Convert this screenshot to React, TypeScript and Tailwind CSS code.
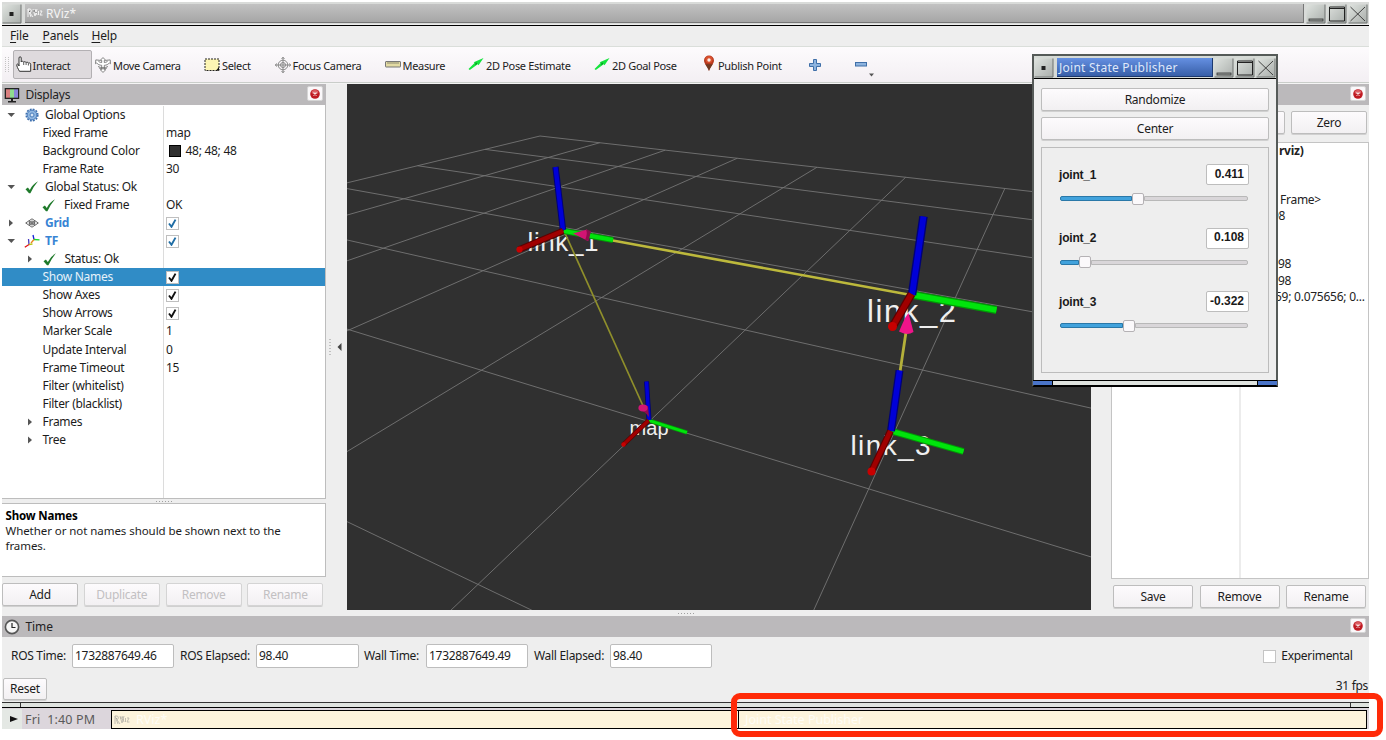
import React from "react";

const UI = "font-['Noto_Sans',sans-serif]";

/* ---------- 3D scene ---------- */

type Pt = [number, number];

// Perspective of the ground plane: grid cell (i, j) to window coordinates.
const depth = (i: number, j: number) => 1 - 0.04379 * i - 0.09111 * j;
const project = (i: number, j: number): Pt => {
  const w = depth(i, j);
  return [(33.47 * i - 99.22 * j + 540) / w, (0.49 * i - 0.245 * j + 136) / w];
};

function gridLines() {
  const lines: [Pt, Pt][] = [];
  const NEAR = 0.02;
  for (let k = 0; k <= 10; k++) {
    const maxJ = Math.min(10, (1 - 0.04379 * k - NEAR) / 0.09111);
    const maxI = Math.min(10, (1 - 0.09111 * k - NEAR) / 0.04379);
    if (maxJ > 0) lines.push([project(k, 0), project(k, maxJ)]);
    if (maxI > 0) lines.push([project(0, k), project(maxI, k)]);
  }
  return lines;
}

function Rod({ a, b, w, c, dark }: { a: Pt; b: Pt; w: number; c: string; dark: string }) {
  return (
    <g>
      <line x1={a[0]} y1={a[1]} x2={b[0]} y2={b[1]} stroke={dark} strokeWidth={w} />
      <line x1={a[0]} y1={a[1]} x2={b[0]} y2={b[1]} stroke={c} strokeWidth={w * 0.68} />
    </g>
  );
}

const BLUE = { c: "#0000d8", dark: "#000078" };
const GREEN = { c: "#00e40c", dark: "#009a06" };
const RED = { c: "#a00000", dark: "#5c0000" };

function Scene() {
  return (
    <svg className="block h-[526px] w-[744px] bg-[#303030]" viewBox="347 84 744 526">
      <g stroke="#757575" strokeWidth="0.9">
        {gridLines().map(([a, b], n) => (
          <line key={n} x1={a[0]} y1={a[1]} x2={b[0]} y2={b[1]} />
        ))}
      </g>
      <g fill="#efefef" fontFamily="Liberation Sans, sans-serif">
        <text x="527.500" y="250.500" fontSize="26" textLength="71">link_1</text>
        <text x="867" y="321.500" fontSize="31" textLength="89">link_2</text>
        <text x="850.500" y="454.500" fontSize="28" textLength="80">link_3</text>
        <text x="629.500" y="435" fontSize="20" textLength="39">map</text>
      </g>
      <line x1="564" y1="231" x2="644" y2="408" stroke="#8f8f2b" strokeWidth="1.7" />
      <line x1="610" y1="240" x2="911" y2="295" stroke="#bdb93c" strokeWidth="2.6" />
      <line x1="906" y1="332" x2="900" y2="372" stroke="#b4b03a" strokeWidth="2.8" />

      <Rod a={[564, 231]} b={[613, 240]} w={6} {...GREEN} />
      <Rod a={[563, 230]} b={[555.5, 167]} w={6.4} {...BLUE} />
      <path d="M573 233.500 L587 229.500 Q591 234 588 241 Z" fill="#d21473" />
      <path d="M586 229.500 L591 231 L588.500 241 L585 240 Q588 234 586 229.500Z" fill="#8d0d4e" />
      <Rod a={[563, 231]} b={[519, 249.5]} w={6.4} {...RED} />
      <circle cx="519.500" cy="249.500" r="3.100" fill="#c80000" />

      <Rod a={[911, 294.5]} b={[996.5, 310]} w={8} {...GREEN} />
      <Rod a={[912, 295]} b={[923.5, 216.5]} w={8.6} {...BLUE} />
      <path d="M908.500 313 L913.500 332 Q907 336 899 331.500 L905 318 Z" fill="#f0148a" />
      <Rod a={[911.5, 294]} b={[893, 326]} w={8.4} {...RED} />
      <circle cx="892.500" cy="326.500" r="4.500" fill="#c80000" />

      <Rod a={[891, 431]} b={[963.5, 451.5]} w={6.8} {...GREEN} />
      <Rod a={[891, 431]} b={[899.5, 370.5]} w={8} {...BLUE} />
      <Rod a={[890.5, 431]} b={[871.5, 471.5]} w={7} {...RED} />
      <circle cx="871.500" cy="471.500" r="4" fill="#c80000" />

      <Rod a={[649, 420.5]} b={[687, 432.5]} w={4.2} {...GREEN} />
      <Rod a={[649, 420]} b={[646.5, 381.5]} w={5} {...BLUE} />
      <path d="M638.500 408 L648 406 L649 417 L645.500 413 Z" fill="#8d0d4e" />
      <ellipse cx="643" cy="408" rx="4.600" ry="3.400" fill="#d01575" />
      <Rod a={[648.5, 420.5]} b={[623, 445]} w={4.6} {...RED} />
      <circle cx="623.500" cy="444.500" r="2.200" fill="#c80000" />
    </svg>
  );
}

/* ---------- small widgets ---------- */

function CloseBtn() {
  return (
    <span className="mb-[2px] flex h-[15px] w-[16px] items-center justify-center rounded-[2px] border border-[#d5d5d5] bg-[#faf8fa]">
      <svg width="10" height="10" viewBox="0 0 10 10">
        <circle cx="5" cy="5" r="4.800" fill="#bf1a22" />
        <ellipse cx="5" cy="3" rx="3.400" ry="2" fill="#dc5f64" />
        <path d="M3.500 3.500l3 3M6.500 3.500l-3 3" stroke="#f6e4e4" strokeWidth="1.100" />
      </svg>
    </span>
  );
}

function Btn({ label, cls, off }: { label: string; cls: string; off?: boolean }) {
  return (
    <div
      className={`flex shrink-0 items-center justify-center rounded-[2px] border bg-linear-to-b from-[#fdfbfd] to-[#f2f0f2] text-[12px] tracking-[-0.25px] shadow-[0_1px_0_#d0d0d0] ${
        off ? "border-[#d4d4d4] text-[#c2c0c2]" : "border-[#bdbdbd] text-[#1c1c1c]"
      } ${cls}`}
    >
      {label}
    </div>
  );
}

function WinButton({ kind }: { kind: "dot" | "min" | "max" | "close" }) {
  return (
    <svg className="block shrink-0" width="20" height="20" viewBox="0 0 20 20">
      <defs>
        <linearGradient id={`wb-${kind}`} x1="0" y1="0" x2="1" y2="1">
          <stop offset="0" stopColor="#dfe3df" />
          <stop offset="1" stopColor="#a9aeab" />
        </linearGradient>
      </defs>
      <rect x="0.500" y="0.500" width="18.500" height="18.500" fill={`url(#wb-${kind})`} />
      <path d="M0.500 19h18.500V0.500" fill="none" stroke="#6f7371" />
      {kind === "dot" && <rect x="7.500" y="8" width="4" height="4" fill="#222" />}
      {kind === "min" && <rect x="3" y="15" width="14" height="2" fill="#9a9e9b" stroke="#333" strokeWidth="0.800" />}
      {kind === "max" && <path d="M2.500 3h15v14h-15zM2.500 4.500h15" fill="none" stroke="#222" strokeWidth="1" />}
      {kind === "close" && <path d="M2.500 3l14.500 14M17 3L2.500 17" stroke="#333" strokeWidth="0.900" />}
    </svg>
  );
}

function RvizMark({ className, fill }: { className?: string; fill: string }) {
  return (
    <svg className={className} width="16" height="10" viewBox="0 0 16 10" fill="none" stroke={fill} strokeWidth="1">
      <path d="M1 9V1h2.500l1 2-1.500 2L6 9M1 1l3 8M6 1l2 7 2-7M8 1l2 6M11.500 3v4M13 3h2l-2 4h2.500" />
      <path d="M2 3l1 1M7 2v2M9 4v1" stroke="#666" />
    </svg>
  );
}

/* ---------- toolbar ---------- */

const HandIcon = () => (
  <svg className="-mt-[2px]" width="16" height="16" viewBox="0 0 16 16" fill="#fff" stroke="#333" strokeWidth="1">
    <path d="M3.500 15.300C2 12.500.6 10.500.8 8.500c.7-1 1.700-.4 2.200 1.500V2c0-1.700 2.200-1.700 2.200 0v4c0-1 2.400-1 2.500.3.200-.9 2.300-.8 2.400.4.300-.8 2.200-.6 2.300.5.500-.6 2.300-.3 2.300 1v7.100z" />
    <path d="M7.700 6.500v2.500M10.100 7v2M12.400 7.500v2" strokeWidth="0.800" />
  </svg>
);
const MoveIcon = () => (
  <svg width="16" height="16" viewBox="0 0 16 16" fill="#fff" stroke="#777" strokeWidth="0.900">
    <path d="M8 .6l2.800 2.700H9.300v2.200c1.800 0 2.700-.6 3.100-1.300l-1-.9 3.800-.4.3 3.800-1.100-.8c-1.200 1.500-2.900 2.300-5.100 2.400v4.400h1.500L8 15.400l-2.800-2.700h1.500V8.300C4.500 8.200 2.800 7.400 1.600 5.900l-1.100.8.3-3.800 3.800.4-1 .9c.4.700 1.300 1.300 3.100 1.300V3.300H5.200z" />
    <path d="M3 9.500c3 1.600 7 1.600 10 0M4 11c2.500 1 5.500 1 8 0" fill="none" />
  </svg>
);
const SelectIcon = () => (
  <svg width="16" height="14" viewBox="0 0 16 14">
    <rect x="1" y="1" width="14" height="11.500" fill="#fdf5b4" stroke="#222" strokeWidth="1" strokeDasharray="2 1" />
    <path d="M12 12.500h3V9z" fill="#111" />
  </svg>
);
const FocusIcon = () => (
  <svg width="16" height="16" viewBox="0 0 16 16" fill="none" stroke="#888" strokeWidth="1">
    <circle cx="8" cy="8" r="4.800" />
    <circle cx="8" cy="8" r="2.500" />
    <path d="M8 0v16M0 8h16M6.500 2L8 .3 9.500 2M6.500 14L8 15.700 9.500 14M2 6.500L.3 8 2 9.500M14 6.500L15.700 8 14 9.500" />
  </svg>
);
const MeasureIcon = () => (
  <svg width="16" height="7" viewBox="0 0 16 7">
    <rect x="0.500" y="0.500" width="15" height="5.500" rx="0.500" fill="#e3dba4" stroke="#777" />
    <path d="M3 1v2M5 1v2M7 1v2M9 1v2M11 1v2M13 1v2" stroke="#776" strokeWidth="0.800" />
  </svg>
);
const ArrowIcon = () => (
  <svg className="-mt-[2px]" width="16" height="14" viewBox="0 0 16 14">
    <path d="M0.500 12L6.500 6l-.8-.8L15.500 1 10.500 8.200l-.8-1L1.800 13z" fill="#14e43c" />
    <path d="M7.800 5l1.400 1.700-2 1.500z" fill="#0a8a20" />
  </svg>
);
const PinIcon = () => (
  <svg className="-mt-[3px] ml-[1px]" width="12" height="17" viewBox="0 0 12 17">
    <path d="M6 16C5 12 1 9 1 5.500a5 5 0 0110 0C11 9 7 12 6 16z" fill="#b5391f" />
    <path d="M6 16c-.7-2.600-2.600-4.800-3.800-6.800h7.600C8.600 11.200 6.700 13.400 6 16z" fill="#6e3a22" />
    <circle cx="6" cy="4.500" r="3.600" fill="#d9512f" />
    <circle cx="6" cy="5" r="1.700" fill="#fbeee8" />
  </svg>
);

const tools = [
  { label: "Interact", icon: <HandIcon />, w: "w-[79px] mr-[2px] pl-[1.5px] rounded-[2px] border border-[#b3b0b3] bg-[#dedadd]", ic: "w-[17px]" },
  { label: "Move Camera", icon: <MoveIcon />, w: "w-[109px] pl-[1px]", ic: "w-[18px]" },
  { label: "Select", icon: <SelectIcon />, w: "w-[70px] pl-[1px]", ic: "w-[18px]" },
  { label: "Focus Camera", icon: <FocusIcon />, w: "w-[110px] pl-[1.5px]", ic: "w-[18px]" },
  { label: "Measure", icon: <MeasureIcon />, w: "w-[84px] pl-[1.5px]", ic: "w-[18px]" },
  { label: "2D Pose Estimate", icon: <ArrowIcon />, w: "w-[126px] pl-[1px]", ic: "w-[18px]" },
  { label: "2D Goal Pose", icon: <ArrowIcon />, w: "w-[109px] pl-[1px]", ic: "w-[18px]" },
  { label: "Publish Point", icon: <PinIcon />, w: "w-[105px]", ic: "w-[16px]" },
];

function Toolbar() {
  return (
    <div className="flex h-[37px] items-center border-y border-[#c9cdc9] border-t-[#dadeda] bg-linear-to-b from-[#fdfbfd] to-[#f3eff3] text-[11px] tracking-[-0.32px] text-[#222]">
      <div className="ml-[3px] mr-[3px] grid w-[5px] grid-cols-2 gap-[1px]">
        {Array.from({ length: 16 }).map((_, i) => (
          <span key={i} className="h-[1px] w-[1px] bg-[#c4c4c4]" />
        ))}
      </div>
      {tools.map((t) => (
        <div key={t.label} className={`flex h-[29px] shrink-0 items-center whitespace-nowrap ${t.w}`}>
          <span className={`flex shrink-0 ${t.ic}`}>{t.icon}</span>
          <span className="pt-[3px]">{t.label}</span>
        </div>
      ))}
      <svg className="ml-[2px]" width="12" height="12" viewBox="0 0 12 12">
        <path d="M4.500 0.500h3v4h4v3h-4v4h-3v-4h-4v-3h4z" fill="#8db3de" stroke="#3f6fa8" />
      </svg>
      <svg className="ml-[34px] mt-[2px]" width="19" height="22" viewBox="0 0 19 22">
        <rect x="0.500" y="7.500" width="11" height="3.500" fill="#8db3de" stroke="#3f6fa8" />
        <path d="M14 18.500h5l-2.500 3z" fill="#555" />
      </svg>
    </div>
  );
}

/* ---------- displays tree ---------- */

const Check = ({ c = "#111" }: { c?: string }) => (
  <span className="-ml-[0.5px] flex h-[13px] w-[13px] items-center justify-center border border-[#bfbfbf] bg-white">
    <svg width="9" height="9" viewBox="0 0 9 9" fill="none" stroke={c} strokeWidth="1.9">
      <path d="M1 4.500l2.500 3.300L7.500.6" />
    </svg>
  </span>
);
const Tick = () => (
  <svg width="14" height="13" viewBox="0 0 14 13">
    <path d="M0.500 8.200l2.400-1.600 1.900 2.400Q7.500 3.200 13 .3 8.500 5.500 5.400 12.200H4z" fill="#1f7a2b" />
  </svg>
);
const Gear = () => (
  <svg width="14" height="14" viewBox="0 0 14 14" fill="none">
    <circle cx="7" cy="7" r="5.800" stroke="#3d6fae" strokeWidth="1.600" strokeDasharray="1.900 1.140" />
    <circle cx="7" cy="7" r="4.800" fill="#8fb6e0" stroke="#4a7dbd" />
    <circle cx="7" cy="7" r="2" fill="#d6e5f5" stroke="#4a7dbd" />
  </svg>
);
const GridIcon = () => (
  <svg width="14" height="10" viewBox="0 0 14 10" fill="none" stroke="#555" strokeWidth="0.900">
    <path d="M7 .8L13.300 5 7 9.200.7 5zM3.800 2.900l6.300 4.200M10.200 2.900L3.900 7.100" />
    <path d="M7 2.900L10.200 5 7 7.100 3.800 5z" />
  </svg>
);
const TfIcon = () => (
  <svg width="16" height="14" viewBox="0 0 16 14" fill="none" strokeWidth="1.300">
    <path d="M9 1l1 4.500" stroke="#1522d8" />
    <path d="M10 5.500l5.500.3" stroke="#19d82c" />
    <path d="M10 5.500L7 9" stroke="#e8841a" />
    <path d="M4.500 5L5 10.500" stroke="#4438c0" />
    <path d="M5 10.500l3.500-.5" stroke="#b8c81a" />
    <path d="M5 10.500L.8 13.300" stroke="#e01414" />
  </svg>
);
const Tri = ({ open }: { open: boolean }) => (
  <svg width="8" height="8" viewBox="0 0 8 8" fill="#555">
    {open ? <path d="M0.500 2h7.500L4.300 6z" /> : <path d="M2 .5v7L6 4z" />}
  </svg>
);

type Row = {
  t: string;
  pad: string;
  open?: boolean;
  icon?: React.ReactNode;
  iconBox?: string;
  v?: React.ReactNode;
  link?: boolean;
  sel?: boolean;
};

const ROOT_ICON = "w-[16px] mr-[5.5px]";

const rows: Row[] = [
  { t: "Global Options", pad: "pl-[5px]", open: true, icon: <Gear />, iconBox: ROOT_ICON },
  { t: "Fixed Frame", pad: "pl-[40.5px]", v: "map" },
  {
    t: "Background Color",
    pad: "pl-[40.5px]",
    v: (
      <span className="flex items-center gap-[4.5px] pl-[3px]">
        <span className="h-[12px] w-[12px] border border-black bg-[#303030]" />
        48; 48; 48
      </span>
    ),
  },
  { t: "Frame Rate", pad: "pl-[40.5px]", v: "30" },
  { t: "Global Status: Ok", pad: "pl-[5px]", open: true, icon: <Tick />, iconBox: ROOT_ICON },
  { t: "Fixed Frame", pad: "pl-[40px]", icon: <Tick />, iconBox: "w-[14px] mr-[8px]", v: "OK" },
  { t: "Grid", pad: "pl-[5px]", open: false, icon: <GridIcon />, iconBox: ROOT_ICON, v: <Check c="#1f6da5" />, link: true },
  { t: "TF", pad: "pl-[5px]", open: true, icon: <TfIcon />, iconBox: ROOT_ICON, v: <Check c="#1f6da5" />, link: true },
  { t: "Status: Ok", pad: "pl-[24px]", open: false, icon: <Tick />, iconBox: "w-[14px] mr-[8px]" },
  { t: "Show Names", pad: "pl-[40.5px]", v: <Check />, sel: true },
  { t: "Show Axes", pad: "pl-[40.5px]", v: <Check /> },
  { t: "Show Arrows", pad: "pl-[40.5px]", v: <Check /> },
  { t: "Marker Scale", pad: "pl-[40.5px]", v: "1" },
  { t: "Update Interval", pad: "pl-[40.5px]", v: "0" },
  { t: "Frame Timeout", pad: "pl-[40.5px]", v: "15" },
  { t: "Filter (whitelist)", pad: "pl-[40.5px]" },
  { t: "Filter (blacklist)", pad: "pl-[40.5px]" },
  { t: "Frames", pad: "pl-[24px]", open: false },
  { t: "Tree", pad: "pl-[24px]", open: false },
];

function TreeRow({ r }: { r: Row }) {
  return (
    <div className={`flex h-[18.06px] shrink-0 items-stretch ${r.sel ? "bg-[#308cc6] text-[#e6f2fa]" : "text-[#1c1c1c]"}`}>
      <div className={`flex w-[162px] shrink-0 items-center whitespace-nowrap border-r ${r.sel ? "border-[#308cc6]" : "border-[#dcdcdc]"} ${r.pad}`}>
        {r.open !== undefined && (
          <span className="w-[16.5px] shrink-0">
            <Tri open={r.open} />
          </span>
        )}
        {r.icon && <span className={`flex shrink-0 items-center justify-center ${r.iconBox}`}>{r.icon}</span>}
        <span className={r.link ? "font-bold text-[#3784d4]" : ""}>{r.t}</span>
      </div>
      <div className="flex items-center pl-[2px]">{r.v}</div>
    </div>
  );
}

function DisplaysDock() {
  return (
    <div className="flex w-[324px] shrink-0 flex-col">
      <div className="flex h-[21px] shrink-0 items-center bg-[#bbb9bb] pr-[3px]">
        <svg className="ml-[2px]" width="16" height="16" viewBox="0 0 16 16">
          <rect x="0.700" y="1" width="14.500" height="11" fill="#222" />
          <rect x="2" y="2.300" width="4" height="8.400" fill="#d97f7f" />
          <rect x="6" y="2.300" width="4" height="8.400" fill="#8fdc8f" />
          <rect x="10" y="2.300" width="4" height="8.400" fill="#8a86d8" />
          <path d="M7 12h2v2h3v1.500H4V14h3z" fill="#222" />
        </svg>
        <span className="ml-[5.5px] flex-1 text-[12px] tracking-[-0.25px] text-[#222]">Displays</span>
        <CloseBtn />
      </div>
      <div className="flex h-[394px] shrink-0 flex-col border-b border-r border-[#bdbdbd] bg-white text-[12px] tracking-[-0.28px]">
        <div className="h-[0.9px] w-full shrink-0" />
        {rows.map((r, i) => (
          <TreeRow key={i} r={r} />
        ))}
        <div className="w-[162px] flex-1 border-r border-[#dcdcdc]" />
      </div>
      <div className="flex h-[4px] shrink-0 items-center justify-center gap-[2px]">
        {Array.from({ length: 6 }).map((_, i) => (
          <span key={i} className="h-[1px] w-[1px] bg-[#a0a0a0]" />
        ))}
      </div>
      <div className="h-[74px] shrink-0 border border-l-0 border-[#bdbdbd] bg-white pl-[3.5px] pt-[3.5px] text-[11.5px] leading-[15.2px] tracking-[-0.06px] text-[#1c1c1c]">
        <div className="font-bold tracking-[-0.15px] text-black">Show Names</div>
        <div>
          Whether or not names should be shown next to the
          <br />
          frames.
        </div>
      </div>
      <div className="flex gap-[5.8px] pt-[6px]">
        <Btn label="Add" cls="h-[23px] w-[76px]" />
        <Btn label="Duplicate" off cls="h-[23px] w-[76px]" />
        <Btn label="Remove" off cls="h-[23px] w-[76px]" />
        <Btn label="Rename" off cls="h-[23px] w-[76px]" />
      </div>
    </div>
  );
}

/* ---------- views dock ---------- */

const viewLines = [
  { t: "rviz)", cls: "font-bold h-[48.5px]" },
  { t: "t Frame>", cls: "h-[16.2px] -ml-[6px]" },
  { t: "98", cls: "h-[48.7px] -ml-[7px]" },
  { t: ".98", cls: "h-[16.2px] -ml-[4px]" },
  { t: ".98", cls: "h-[16.2px] -ml-[4px]" },
  { t: "59; 0.075656; 0...", cls: "h-[16.2px] -ml-[4px]" },
];

function ViewsDock() {
  return (
    <div className="flex w-[258px] shrink-0 flex-col">
      <div className="flex h-[21px] shrink-0 items-center justify-end bg-[#bbb9bb] pr-[3px]">
        <CloseBtn />
      </div>
      <div className="flex h-[37px] shrink-0 justify-end gap-[6px] pr-[2px] pt-[6px]">
        <Btn label="" cls="h-[23px] w-[76px]" />
        <Btn label="Zero" cls="h-[23px] w-[76px]" />
      </div>
      <div className="flex h-[437px] shrink-0 border border-[#c4c4c4] bg-white">
        <div className="w-[129px] shrink-0 border-r-2 border-[#ececec]" />
        <div className="pl-[38px] text-[12px] leading-[16px] tracking-[-0.25px] text-[#222]">
          {viewLines.map((l, i) => (
            <div key={i} className={`whitespace-nowrap ${l.cls}`}>
              {l.t}
            </div>
          ))}
        </div>
      </div>
      <div className="flex gap-[6.5px] pl-[2px] pt-[6px]">
        <Btn label="Save" cls="h-[23px] w-[80px]" />
        <Btn label="Remove" cls="h-[23px] w-[80px]" />
        <Btn label="Rename" cls="h-[23px] w-[80px]" />
      </div>
    </div>
  );
}

/* ---------- time panel ---------- */

function Field({ label, value, labelW, boxW }: { label: string; value: string; labelW: string; boxW: string }) {
  return (
    <div className="flex items-center">
      <span className={`whitespace-nowrap ${labelW}`}>{label}</span>
      <span className={`flex h-[23.5px] items-center rounded-[2px] border border-[#bdbdbd] bg-white pb-[1px] pl-[2px] ${boxW}`}>{value}</span>
    </div>
  );
}

function TimePanel() {
  return (
    <div className="h-[86px] shrink-0 text-[12px] tracking-[-0.3px] text-[#1c1c1c]">
      <div className="flex h-[21px] items-center bg-[#bbb9bb] pr-[3px]">
        <svg className="ml-[2px]" width="16" height="16" viewBox="0 0 16 16" fill="none">
          <circle cx="8" cy="8" r="6.600" fill="#f6f6f6" stroke="#555" strokeWidth="1.600" />
          <path d="M8 4v4.500h3.500" stroke="#222" strokeWidth="1.200" />
        </svg>
        <span className="ml-[5.5px] flex-1 tracking-[-0.1px] text-[#222]">Time</span>
        <CloseBtn />
      </div>
      <div className="flex h-[37px] items-center pl-[9px] pt-[1px]">
        <Field label="ROS Time:" value="1732887649.46" labelW="w-[61px]" boxW="w-[102px]" />
        <div className="w-[6px]" />
        <Field label="ROS Elapsed:" value="98.40" labelW="w-[76px]" boxW="w-[103px]" />
        <div className="w-[5px]" />
        <Field label="Wall Time:" value="1732887649.49" labelW="w-[62px]" boxW="w-[102px]" />
        <div className="w-[6px]" />
        <Field label="Wall Elapsed:" value="98.40" labelW="w-[76px]" boxW="w-[102px]" />
        <div className="ml-auto flex items-center gap-[5px] pr-[16.5px]">
          <span className="h-[13px] w-[13px] border border-[#c4c4c4] bg-white" />
          Experimental
        </div>
      </div>
      <div className="flex items-start justify-between pt-[4px]">
        <Btn label="Reset" cls="ml-[1px] h-[22px] w-[44px]" />
        <span className="-mt-px pr-px">31 fps</span>
      </div>
    </div>
  );
}

/* ---------- task bar ---------- */

function TaskBar() {
  return (
    <div className="flex h-[27px] shrink-0 flex-col">
      <div className="h-[5px] border-t border-[#333] bg-[#dfe3df]">
        <div className="mx-[18px] h-[4px] border-x border-[#333]" />
      </div>
      <div className="flex h-[22px] items-end border-t border-black bg-[#dcd6dc]">
        <div className="flex h-[20px] w-[20px] items-center justify-center bg-[#e4e8e4]">
          <svg className="ml-[3px]" width="8" height="8" viewBox="0 0 8 8">
            <path d="M0 1l8 3-8 3z" fill="#111" />
          </svg>
        </div>
        <div className="h-[20px] w-[89px] whitespace-nowrap pl-[3px] text-[12.5px] leading-[22px] tracking-[0.15px] text-[#5a5a5a]">Fri&nbsp; 1:40 PM</div>
        <div className="flex h-[19px] w-[628px] items-center border border-black bg-[#fdf4dc] pt-[2px] text-[12.5px] text-[#fffdf6]">
          <RvizMark className="mb-[2px] ml-[2px] mr-[6px] opacity-50" fill="#888" />
          RViz*
        </div>
        <div className="-ml-px flex h-[19px] w-[629px] items-center border border-black bg-[#fdf4dc] pl-[6px] pt-[2px] text-[12.5px] text-[#fffdf6]">
          Joint State Publisher
        </div>
      </div>
    </div>
  );
}

/* ---------- joint window ---------- */

const joints = [
  { n: "joint_1", v: "0.411", p: 78 },
  { n: "joint_2", v: "0.108", p: 25 },
  { n: "joint_3", v: "-0.322", p: 69 },
];

function JointWindow() {
  return (
    <div className="absolute left-[1032px] top-[54px] flex h-[333px] w-[246px] flex-col border-2 border-[#555a58] border-b-black bg-[#eeeeee]">
      <div className="flex h-[23px] shrink-0 items-end border-b border-black bg-[#d6dad6]">
        <WinButton kind="dot" />
        <div className="mb-px ml-[3px] mr-[1px] h-[19px] w-[156px] whitespace-nowrap border-b border-r border-[#1d3a70] bg-linear-to-b from-[#6590e2] to-[#385fa8] pl-[2px] text-[12px] leading-[20px] tracking-[0.25px] text-[#dfe8fa]">
          Joint State Publisher
        </div>
        <WinButton kind="min" />
        <span className="w-px" />
        <WinButton kind="max" />
        <span className="w-px" />
        <WinButton kind="close" />
      </div>
      <div className="flex flex-1 flex-col px-[7px] pt-[9px]">
        <Btn label="Randomize" cls="h-[23px] w-full" />
        <Btn label="Center" cls="mt-[6px] h-[23px] w-full" />
        <div className="mt-[7px] h-[226px] border border-[#bcbcbc] pl-[17px] pr-[19px] pt-[16px]">
          {joints.map((j) => (
            <div key={j.n} className="h-[63.7px]">
              <div className="flex h-[21px] items-center justify-between font-['Liberation_Sans',sans-serif] text-[12px] font-bold tracking-[-0.2px] text-[#1a1a1a]">
                <span>{j.n}</span>
                <span className="flex h-[21px] w-[43px] items-center justify-end rounded-[2px] border border-[#bdbdbd] bg-white pb-[2px] pr-[4px] tracking-[0px]">{j.v}</span>
              </div>
              <div className="ml-px mt-[7px] flex h-[13px] w-[188px] items-center">
                <div className="h-[5px] rounded-l-[2px] border border-[#2a78a8] bg-[#41a2dc]" style={{ width: j.p - 6 }} />
                <div className="h-[12px] w-[12px] rounded-[2px] border border-[#b5b2b5] bg-[#fbf9fb]" />
                <div className="h-[5px] flex-1 rounded-r-[2px] border border-[#b8b8b8] bg-[#d9d6d9]" />
              </div>
            </div>
          ))}
        </div>
      </div>
      <div className="-mx-[1px] flex h-[5px] shrink-0 border-t border-black">
        <div className="w-[20px] border-r border-black bg-[#4a74c8]" />
        <div className="flex-1 bg-[#dfe3df]" />
        <div className="w-[20px] border-l border-black bg-[#4a74c8]" />
      </div>
    </div>
  );
}

export default function App() {
  return (
    <div className={`relative h-[740px] w-[1386px] overflow-hidden bg-white ${UI}`}>
      <div className="ml-[2px] flex w-[1367px] flex-col bg-[#eeeeee]">
        <div className="flex h-[24px] shrink-0 items-end border-t-2 border-white bg-[#d9dbd9]">
          <WinButton kind="dot" />
          <div className="mb-px ml-[3px] flex h-[19px] flex-1 items-center border-b border-r border-[#777] bg-linear-to-b from-[#c2c2c2] to-[#a6a6a6] pt-[1px] text-[12px] text-[#f4f4f4]">
            <RvizMark className="mb-px ml-[2px] mr-[3px]" fill="#f2f2f2" />
            RViz*
          </div>
          <span className="w-[2px]" />
          <WinButton kind="min" />
          <span className="w-px" />
          <WinButton kind="max" />
          <span className="w-px" />
          <WinButton kind="close" />
          <span className="w-px" />
        </div>
        <div className="h-[1px] bg-[#eee]" />
        <div className="flex h-[21px] shrink-0 items-center border-t border-black pl-[8px] text-[12px] tracking-[-0.15px] text-[#1c1c1c]">
          <span className="w-[32.5px]"><u className="underline-offset-2">F</u>ile</span>
          <span className="w-[49px]"><u className="underline-offset-2">P</u>anels</span>
          <span><u className="underline-offset-2">H</u>elp</span>
        </div>
        <Toolbar />
        <div className="h-px bg-[#f4f4f4]" />
        <div className="flex h-[526px] shrink-0">
          <DisplaysDock />
          <div className="flex w-[20.5px] shrink-0 items-center justify-between pl-[3px] pr-[5px]">
            <span className="grid gap-[2px]">
              {Array.from({ length: 6 }).map((_, i) => (
                <span key={i} className="h-[1px] w-[2px] bg-[#c0c0c0]" />
              ))}
            </span>
            <svg width="5" height="8" viewBox="0 0 5 8" fill="#444">
              <path d="M4.500 0v8L0.500 4z" />
            </svg>
          </div>
          <Scene />
          <div className="w-[20.5px] shrink-0" />
          <ViewsDock />
        </div>
        <div className="flex h-[6px] shrink-0 items-center justify-center gap-[2px]">
          {Array.from({ length: 6 }).map((_, i) => (
            <span key={i} className="h-[1px] w-[1px] bg-[#a0a0a0]" />
          ))}
        </div>
        <TimePanel />
        <TaskBar />
      </div>
      <JointWindow />
      <div className="absolute left-[731px] top-[693px] h-[44px] w-[652px] rounded-[9px] border-[6px] border-[#ff2a08]" />
    </div>
  );
}
